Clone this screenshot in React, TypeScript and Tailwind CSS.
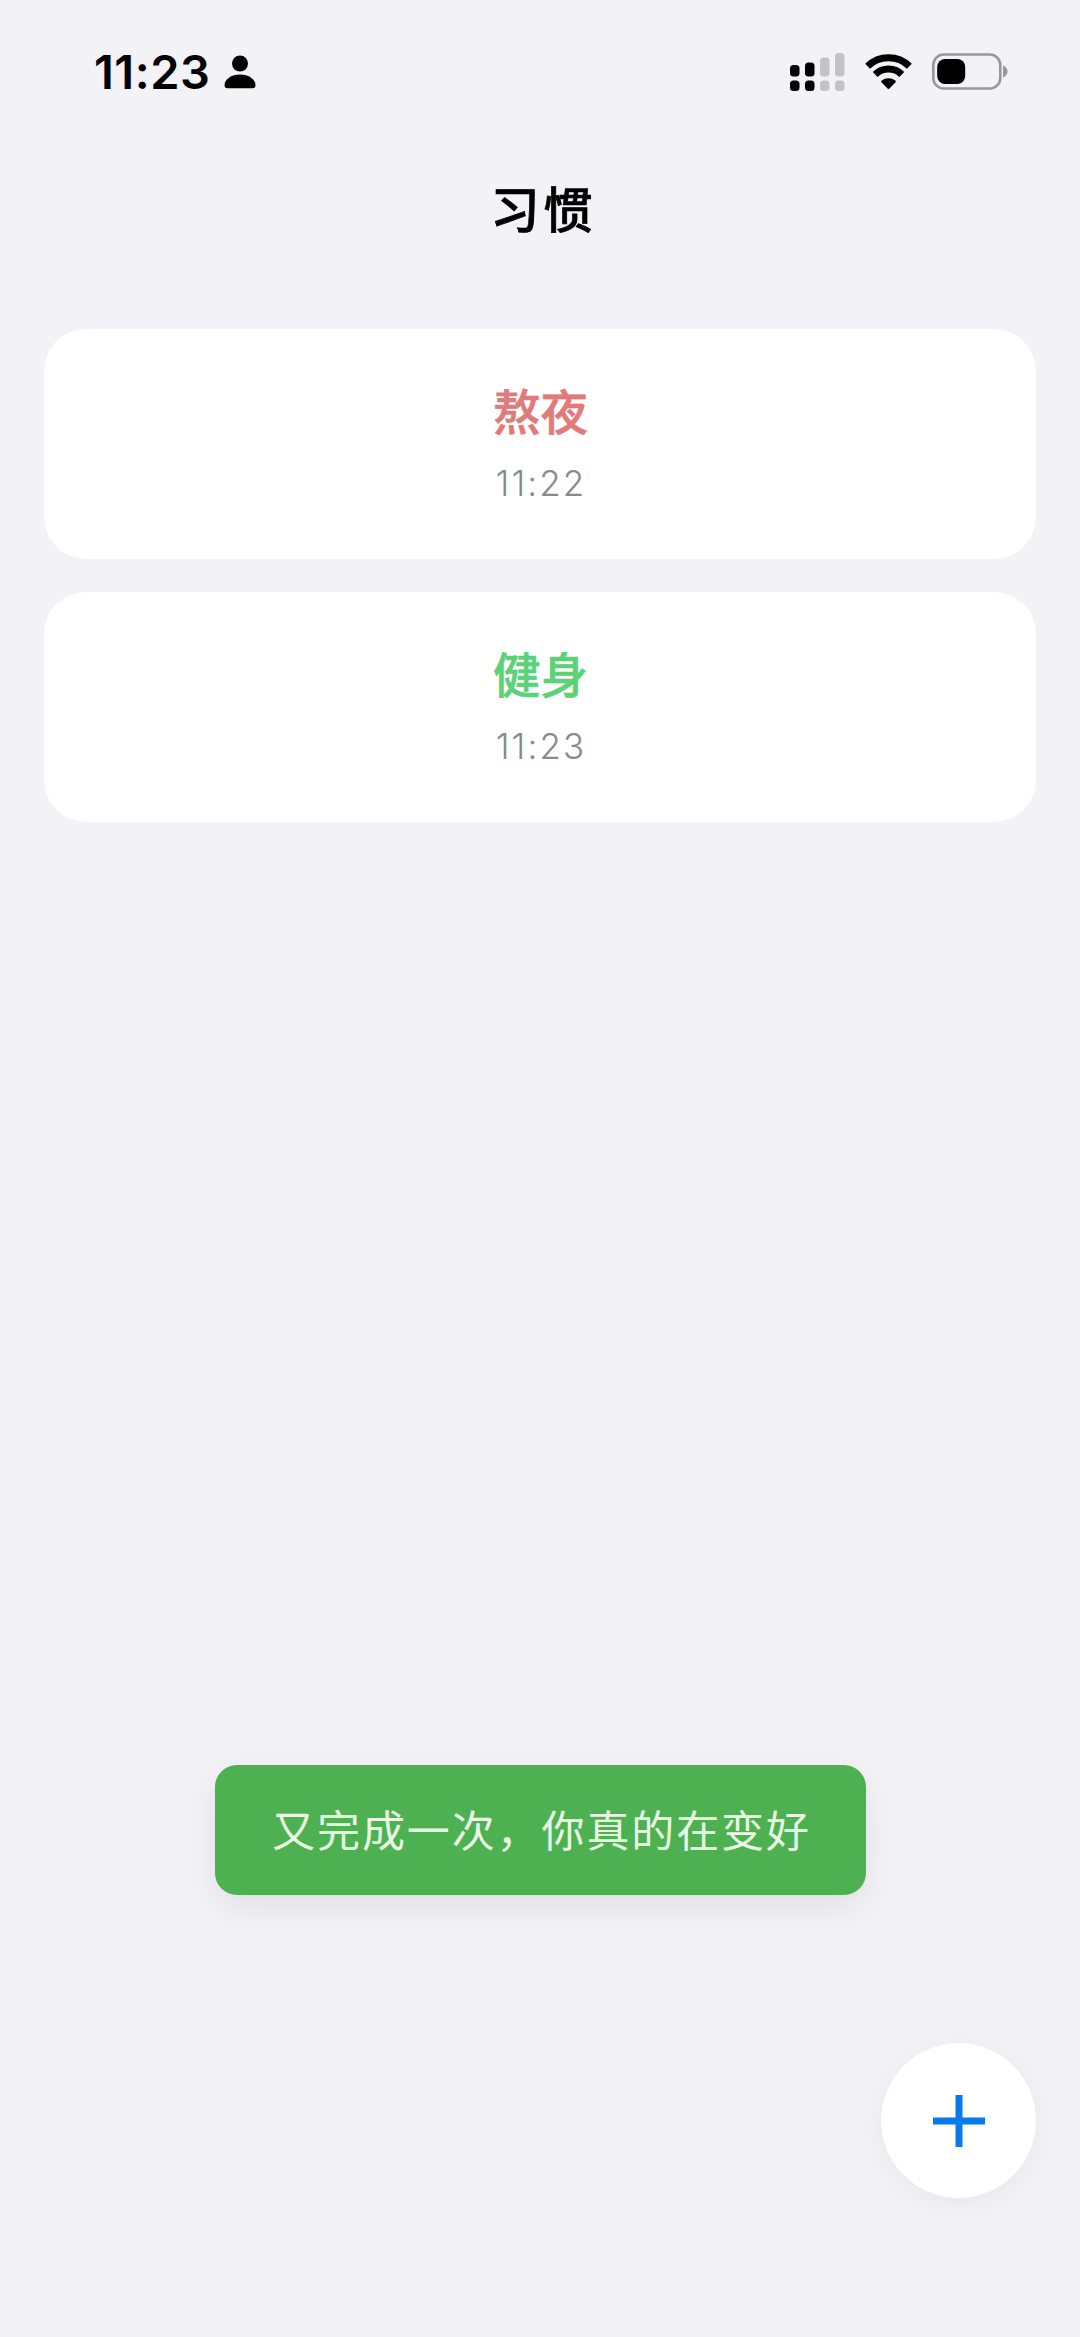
import clsx from 'clsx';

interface Habit {
  id: string;
  name: string;
  time: string;
  kind: 'good' | 'bad';
}

const habits: Habit[] = [
  { id: '1', name: '熬夜', time: '11:22', kind: 'bad' },
  { id: '2', name: '健身', time: '11:23', kind: 'good' },
];

function SignalIcon() {
  return (
    <svg width="55" height="39" viewBox="0 0 55 39">
      <g fill="#000">
        <rect x="0" y="12" width="9.5" height="11.5" rx="3.5" />
        <rect x="15" y="9.5" width="9.5" height="14" rx="3.5" />
        <rect x="0" y="27.5" width="9.5" height="10.5" rx="3.5" />
        <rect x="15" y="27.5" width="9.5" height="10.5" rx="3.5" />
      </g>
      <g fill="#c3c3c7">
        <rect x="30" y="4.5" width="9.5" height="19" rx="3.5" />
        <rect x="45" y="0" width="9.5" height="23.5" rx="3.5" />
        <rect x="30" y="27.5" width="9.5" height="10.5" rx="3.5" />
        <rect x="45" y="27.5" width="9.5" height="10.5" rx="3.5" />
      </g>
    </svg>
  );
}

function WifiIcon() {
  return (
    <svg className="-mt-px" width="47" height="35" viewBox="0 0 47 35" fill="none">
      <path d="M2.6 12.2A30 30 0 0 1 44.4 12.2" stroke="#000" strokeWidth="7" />
      <path d="M10.2 20.4A19 19 0 0 1 36.8 20.4" stroke="#000" strokeWidth="7" />
      <path
        d="M23.5 35a1.5 1.5 0 0 1-1-.5l-5.8-5.9c-.8-.8-.7-1.5 0-2.1a11 11 0 0 1 13.6 0c.7.6.8 1.3 0 2.1l-5.8 5.9a1.5 1.5 0 0 1-1 .5z"
        fill="#000"
      />
    </svg>
  );
}

function BatteryIcon() {
  return (
    <svg className="-mt-px" width="76" height="37" viewBox="0 0 76 37">
      <rect x="1.3" y="1.5" width="67" height="34" rx="10.5" fill="none" stroke="#98989c" strokeWidth="2.6" />
      <rect x="5.2" y="6" width="28" height="25" rx="8" fill="#000" />
      <path d="M71 12.5c3 1.1 4.5 3.3 4.5 6s-1.5 4.9-4.5 6z" fill="#98989c" />
    </svg>
  );
}

function StatusBar() {
  return (
    <div className="flex h-36 items-center pr-[72px] pl-[94px]">
      <span className="-mt-0.5 w-[130px] font-['Inter',sans-serif] text-[47px] leading-none font-semibold tracking-[0.5px] text-black">
        11:23
      </span>
      <svg width="32" height="34" viewBox="0 0 32 34" fill="#000">
        <circle cx="16" cy="8.5" r="8" />
        <path d="M16 19.5c8.5 0 15.5 5 15.5 10.5 0 2.2-1 3.3-3 3.3h-25c-2 0-3-1.100-3-3.3 0-5.500 7-10.500 15.500-10.500z" />
      </svg>
      <div className="ml-auto flex items-center gap-5">
        <SignalIcon />
        <WifiIcon />
        <BatteryIcon />
      </div>
    </div>
  );
}

function HabitCard({ habit }: { habit: Habit }) {
  return (
    <div className="flex h-[230px] flex-col items-center rounded-[42px] bg-white pt-12">
      <div
        className={clsx(
          'pl-px text-[47.5px] leading-[66px] font-medium [-webkit-text-stroke:0.7px_currentColor]',
          habit.kind === 'bad' ? 'text-[#e07a7b]' : 'text-[#5bd277]'
        )}
      >
        {habit.name}
      </div>
      <div className="mt-[15px] pl-0.5 font-['Inter',sans-serif] text-[35px] leading-[50px] font-[350] tracking-[2.1px] text-[#8a8a8a]">
        {habit.time}
      </div>
    </div>
  );
}

export default function App() {
  return (
    <div className="flex h-[2337px] w-[1080px] flex-col overflow-hidden bg-[#f2f2f7] font-['Noto_Sans_CJK_SC',sans-serif]">
      <StatusBar />

      <h1 className="h-[185px] pt-[27px] pl-[7px] text-center text-[49px] leading-[72px] font-medium tracking-[4px] text-black [-webkit-text-stroke:0.7px_currentColor]">
        习惯
      </h1>

      {/* Habit list */}
      <div className="flex flex-col gap-[33px] px-11">
        {habits.map((habit) => (
          <HabitCard key={habit.id} habit={habit} />
        ))}
      </div>

      {/* Toast */}
      <div className="mt-auto flex justify-center">
        <div className="flex h-[130px] w-[651px] items-center justify-center rounded-[22px] bg-[#4eb151] pb-[3px] pl-[3px] text-[43px] font-normal tracking-[1.9px] text-[#e9f8e4] shadow-[0_12px_36px_rgba(0,0,0,0.08)]">
          又完成一次，你真的在变好
        </div>
      </div>

      {/* Add button */}
      <div className="mt-[148px] mb-[139px] flex justify-end pr-11">
        <button className="flex size-[155px] items-center justify-center rounded-full bg-white shadow-[0_6px_30px_rgba(0,0,0,0.05)]">
          <svg width="52" height="52" viewBox="0 0 52 52" fill="none" stroke="#087bea" strokeWidth="7">
            <path d="M26 0v52M0 26h52" />
          </svg>
        </button>
      </div>
    </div>
  );
}
